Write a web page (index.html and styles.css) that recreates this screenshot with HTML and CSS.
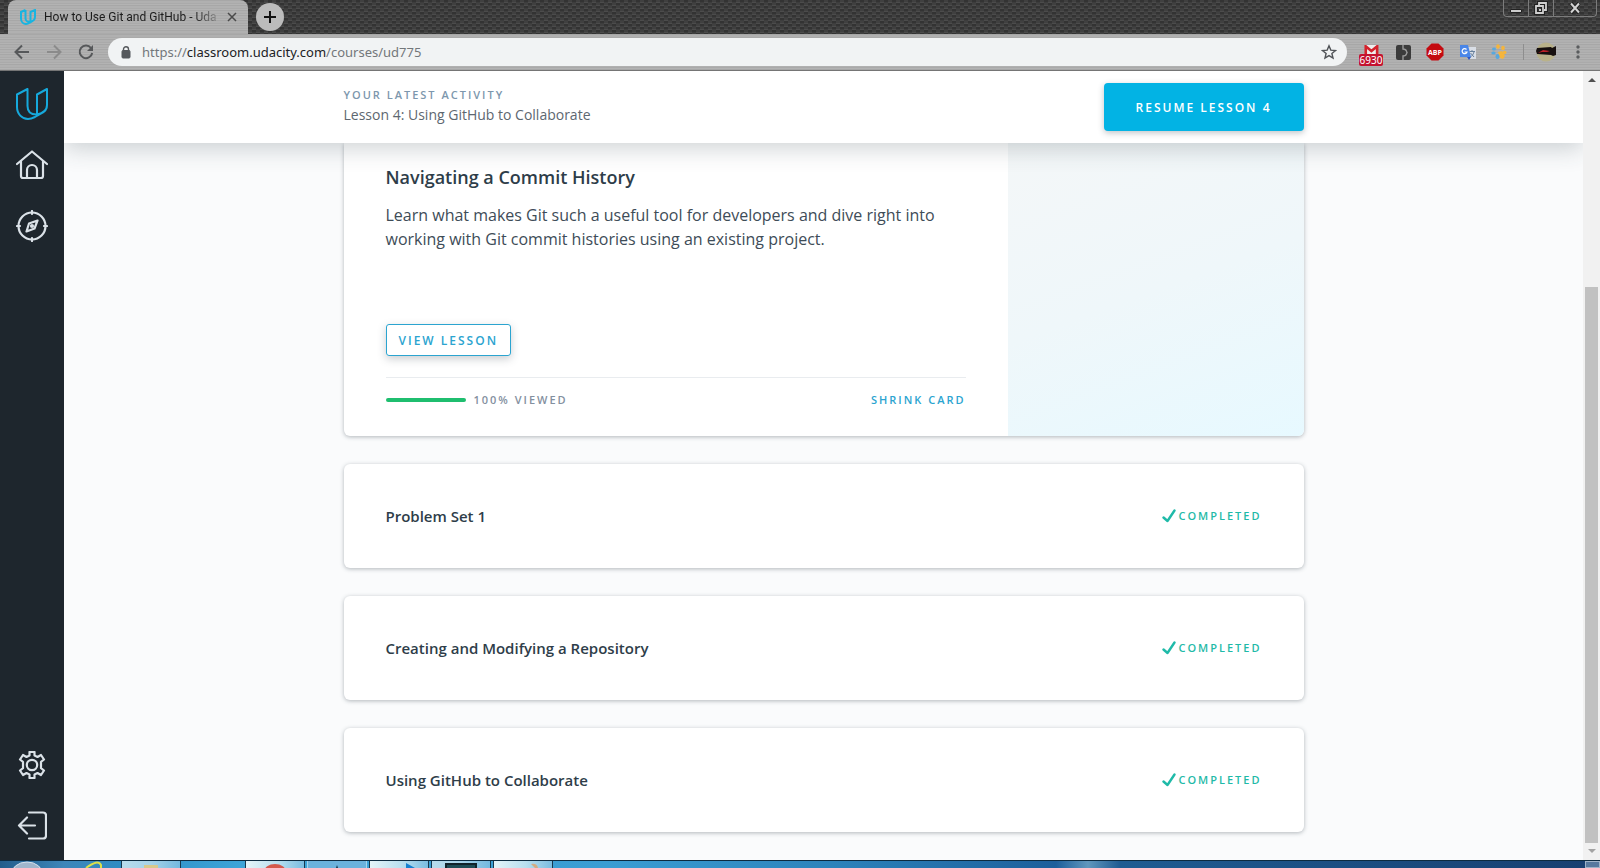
FILE: index.html
```html
<!DOCTYPE html>
<html lang="en">
<head>
<meta charset="utf-8">
<title>How to Use Git and GitHub - Udacity</title>
<link rel="stylesheet" href="styles.css">
</head>
<body>
<svg class="defs" aria-hidden="true">
  <symbol id="u-logo" viewBox="0 0 32 32"><path d="M11.500 1L1 6.500V19c0 7 5 12 11 12 3 0 5-1 7-2l8-4.500c3-2 4-4 4-7.500V1L21 6.500V27M11.500 1v17c0 5 3 8.500 9 8.500M21 26.500c5-1 10-4 10-9.500" fill="none" stroke="#16a9dc" stroke-width="2" stroke-linejoin="round"/></symbol>
  <symbol id="check" viewBox="0 0 14 14"><path d="M1.500 8.500l4 3.500L12.500 1.500" fill="none" stroke="#1fbaa8" stroke-width="2.400" stroke-linecap="round" stroke-linejoin="round"/></symbol>
</svg>

<header class="titlebar">
  <div class="tab">
    <svg class="favicon" viewBox="0 0 32 32" aria-hidden="true"><path d="M11 2L2 6v13c0 7 5 11 10 11 3 0 5-1 8-3 8-4 10-6 10-12V2l-9 4v20M11 2v17c0 4 4 7 9 7" fill="none" stroke="#18b4e0" stroke-width="4"/></svg>
    <span class="tab-title">How to Use Git and GitHub - Uda</span>
    <button class="icon-btn tab-close" aria-label="Close tab"><svg width="10" height="10" viewBox="0 0 10 10"><path d="M1 1l8 8M9 1L1 9" stroke="#4a4a4a" stroke-width="1.500"/></svg></button>
  </div>
  <button class="new-tab" aria-label="New tab"><svg width="12" height="12" viewBox="0 0 12 12"><path d="M6 0v12M0 6h12" stroke="#111" stroke-width="2"/></svg></button>
  <div class="window-buttons">
    <button class="win" aria-label="Minimize"><svg width="12" height="14" viewBox="0 0 12 14"><path d="M.5 8.500h11v3H.5z" fill="#ccc" stroke="#222"/></svg></button>
    <button class="win" aria-label="Restore"><svg width="14" height="14" viewBox="0 0 14 14" fill="none"><path d="M5 4V2h7v7h-2" stroke="#222" stroke-width="4"/><path d="M2 5h7v7H2z" stroke="#222" stroke-width="4"/><path d="M5 4V2h7v7h-2M2 5h7v7H2z" stroke="#d0d0d0" stroke-width="1.800"/><path d="M5 8h2v2H5z" fill="#ccc"/></svg></button>
    <button class="win win-close" aria-label="Close"><svg width="12" height="12" viewBox="0 0 12 12"><path d="M2 1l8 10M10 1L2 11" stroke="#222" stroke-width="4"/><path d="M2 1.500l8 9M10 1.500l-8 9" stroke="#d4d4d4" stroke-width="2"/></svg></button>
  </div>
</header>

<div class="toolbar">
  <button class="icon-btn" aria-label="Back"><svg width="16" height="16" viewBox="0 0 16 16"><path d="M15 8H2M8 1.500L1.500 8 8 14.500" fill="none" stroke="#56585a" stroke-width="2"/></svg></button>
  <button class="icon-btn" aria-label="Forward"><svg width="16" height="16" viewBox="0 0 16 16"><path d="M1 8h13M8 1.500L14.500 8 8 14.500" fill="none" stroke="#8b8b8b" stroke-width="2"/></svg></button>
  <button class="icon-btn" aria-label="Reload"><svg width="16" height="16" viewBox="0 0 16 16"><path d="M13 4A6.300 6.300 0 1 0 14.200 9" fill="none" stroke="#56585a" stroke-width="2"/><path d="M15 1v6H9z" fill="#56585a"/></svg></button>
  <div class="address">
    <svg width="10" height="13" viewBox="0 0 10 13" aria-hidden="true"><rect x="1" y="4.500" width="8" height="7.500" rx="1" fill="#55585c" stroke="#55585c"/><path d="M2.500 5V3.300a2.500 2.500 0 0 1 5 0V5" fill="none" stroke="#55585c" stroke-width="1.400"/></svg>
    <div class="url">https://<span class="host">classroom.udacity.com</span>/courses/ud775</div>
    <button class="icon-btn" aria-label="Bookmark"><svg width="16" height="16" viewBox="0 0 16 16"><path d="M8 1.800l1.800 4.300 4.700.4-3.600 3 1.100 4.600L8 11.600l-4 2.500 1.100-4.600-3.600-3 4.700-.4z" fill="none" stroke="#505357" stroke-width="1.400"/></svg></button>
  </div>
  <div class="extensions">
    <button class="icon-btn ext" aria-label="Gmail, 6930 unread"><svg width="16" height="14" viewBox="0 0 18 16"><rect x="2" width="15" height="12" fill="#eee"/><path d="M3 13V1.500L9.500 7 16 1.500V13" fill="none" stroke="#d3222c" stroke-width="3"/></svg><span class="badge">6930</span></button>
    <button class="icon-btn ext" aria-label="Code extension"><svg width="15" height="15" viewBox="0 0 15 15"><rect width="15" height="15" rx="2" fill="#3b3b3b"/><path d="M7 0v4c4 0 3 2 4 3.500C10 9 11 11 7 11v4" fill="none" stroke="#999" stroke-width="1.400"/></svg></button>
    <button class="icon-btn ext" aria-label="AdBlock Plus"><svg width="18" height="18" viewBox="0 0 18 18"><path d="M5.500.5h7l5 5v7l-5 5h-7l-5-5v-7z" fill="#c40a10"/><text x="9" y="12" text-anchor="middle" class="abp">ABP</text></svg></button>
    <button class="icon-btn ext" aria-label="Translate"><svg width="17" height="17" viewBox="0 0 17 17"><path d="M7 3h10v12H9z" fill="#d9dee6"/><path d="M1 1h8l3 12H1z" fill="#4a86e8"/><path d="M8 13h4l-2 3z" fill="#2a56c6"/><path d="M7.500 5.500A2.500 2.500 0 1 0 8 8H5.500" fill="none" stroke="#fff" stroke-width="1.200"/><path d="M10.500 7.500H16M13 6v1.500M15 8c-1 3-2 4-3.500 5M11.500 9l3.500 4" stroke="#67809c" fill="none"/></svg></button>
    <button class="icon-btn ext" aria-label="Paw extension"><svg width="16" height="16" viewBox="0 0 16 16"><g fill="#f5b53c"><ellipse cx="7" cy="2.500" rx="1.800" ry="2.300"/><ellipse cx="12" cy="4" rx="1.800" ry="2.200"/><ellipse cx="13.500" cy="8.500" rx="2" ry="1.700"/><path d="M7 8l4-1 3 5-2 3-3-1z"/></g><g fill="#57a8df"><ellipse cx="3" cy="5" rx="2" ry="1.600"/><ellipse cx="2.500" cy="9" rx="2.200" ry="1.600"/><ellipse cx="6.500" cy="12.500" rx="2" ry="2.500"/></g></svg></button>
    <span class="divider"></span>
    <button class="icon-btn ext profile" aria-label="Profile"><svg width="20" height="20" viewBox="0 0 20 20"><circle cx="10" cy="10" r="9.500" fill="#b9b28a"/><path d="M1 6l14-1 1 1 4-2v9l-3 1-2-1-14-1-1-3z" fill="#17100f"/><path d="M2 11l5-3 7 1-3 1-5 0z" fill="#bd2227"/></svg></button>
    <button class="icon-btn ext menu" aria-label="Menu"><svg width="4" height="14" viewBox="0 0 4 14" fill="#5a5c5e"><circle cx="2" cy="2" r="1.700"/><circle cx="2" cy="7" r="1.700"/><circle cx="2" cy="12" r="1.700"/></svg></button>
  </div>
</div>

<div class="page">
  <nav class="sidebar" aria-label="Main">
    <a href="#" aria-label="Udacity"><svg width="32" height="32"><use href="#u-logo"/></svg></a>
    <a href="#" aria-label="Home"><svg width="32" height="30" viewBox="0 0 32 30"><path d="M1 14L16 1.500 31 14M5 11v15q0 2 2 2h18q2 0 2-2V11M11 28V20a5 5 0 0 1 10 0v8" /></svg></a>
    <a href="#" aria-label="Explore"><svg width="32" height="32" viewBox="0 0 32 32"><circle cx="16" cy="16" r="13.500"/><path d="M16 1v3M16 28v3M1 16h3M28 16h3M21.500 10.500l-8.500 3-2.500 8 8-3z"/><circle cx="16" cy="16" r="1"/></svg></a>
    <a class="bottom" href="#" aria-label="Settings"><svg width="28" height="28" viewBox="0 0 28 28"><circle cx="14" cy="14" r="5.200"/><path d="M11.500 1h5v3.500l3 1.500 3.500-2 3 4.500-3 2.300v6.400l3 2.300-3 4.500-3.500-2-3 1.500V27h-5v-3.500l-3-1.500L5 24l-3-4.500 3-2.300v-6.400L2 8.500 5 4l3.500 2 3-1.500z"/></svg></a>
    <a href="#" aria-label="Sign out"><svg width="30" height="30" viewBox="0 0 30 30"><path d="M12 1.500h14q3 0 3 3v20q0 3-3 3H12M18 14.500H2M10 6.500l-8 8 8 8"/></svg></a>
  </nav>

  <main class="content">
    <section class="activity">
      <div class="wrap activity-row">
        <div class="activity-text">
          <h2 class="eyebrow">Your latest activity</h2>
          <p class="latest">Lesson 4: Using GitHub to Collaborate</p>
        </div>
        <button class="resume">Resume Lesson 4</button>
      </div>
    </section>

    <div class="wrap cards">
      <article class="card lesson">
        <div class="lesson-body">
          <h3 class="lesson-title">Navigating a Commit History</h3>
          <p class="lesson-text">Learn what makes Git such a useful tool for developers and dive right into working with Git commit histories using an existing project.</p>
          <button class="view">View Lesson</button>
          <div class="lesson-foot">
            <span class="bar"></span>
            <span class="viewed">100% Viewed</span>
            <button class="shrink">Shrink Card</button>
          </div>
        </div>
        <div class="lesson-art"></div>
      </article>
      <article class="card row">
        <h3 class="row-title">Problem Set 1</h3>
        <span class="done"><svg width="14" height="14" aria-hidden="true"><use href="#check"/></svg>Completed</span>
      </article>
      <article class="card row">
        <h3 class="row-title">Creating and Modifying a Repository</h3>
        <span class="done"><svg width="14" height="14" aria-hidden="true"><use href="#check"/></svg>Completed</span>
      </article>
      <article class="card row">
        <h3 class="row-title">Using GitHub to Collaborate</h3>
        <span class="done"><svg width="14" height="14" aria-hidden="true"><use href="#check"/></svg>Completed</span>
      </article>
    </div>
  </main>

  <div class="scrollbar" aria-hidden="true">
    <svg width="8" height="4" viewBox="0 0 8 4"><path d="M0 4l4-4 4 4z" fill="#505050"/></svg>
    <div class="track"><div class="thumb"></div></div>
    <svg width="8" height="4" viewBox="0 0 8 4"><path d="M0 0l4 4 4-4z" fill="#a3a3a3"/></svg>
  </div>
</div>

<footer class="taskbar" aria-hidden="true">
  <svg class="task-start" width="121" height="7" viewBox="0 0 121 7"><ellipse cx="27" cy="14" rx="16" ry="13" fill="#9fb6cc" stroke="#d5e2ee"/><path d="M86 7q12-9 15-3v3" fill="none" stroke="#dbe04a" stroke-width="2"/></svg>
  <span class="task light"><svg width="18" height="5"><path d="M2 2h14v3H2z" fill="#d9c88b"/></svg></span>
  <span class="task-gap"></span>
  <span class="task bright"><svg width="22" height="5"><ellipse cx="11" cy="9" rx="11" ry="8" fill="#d4594c"/></svg></span>
  <span class="task plain"><svg width="8" height="5"><path d="M4 2l1 3H3z" fill="#16364c"/></svg></span>
  <span class="task bright right"><svg width="10" height="5"><path d="M0 0l9 5H0z" fill="#1480d0"/></svg></span>
  <span class="task light"><svg width="32" height="5"><path d="M1 5V1h30v4" fill="#1d4b55" stroke="#10232b" stroke-width="2"/></svg></span>
  <span class="task bright right"><svg width="10" height="5"><path d="M1 1q6-1 7 4H5z" fill="#d3ab82"/></svg></span>
  <span class="task-desktop"></span>
</footer>
</body>
</html>
```
FILE: styles.css
```css
* { box-sizing: border-box; }
body {
  margin: 0;
  height: 100vh;
  display: flex;
  flex-direction: column;
  overflow: hidden;
  font-family: "Open Sans", "Noto Sans", sans-serif;
  color: #2e3d49;
}
h2, h3, p { margin: 0; }
button { font: inherit; color: inherit; padding: 0; border: 0; background: none; }
svg { flex: none; display: block; }
.defs { position: absolute; width: 0; height: 0; }
.icon-btn { display: flex; align-items: center; justify-content: center; }

/* Browser frame */
.titlebar {
  display: flex;
  flex: none;
  height: 34px;
  padding-left: 8px;
  background:
    repeating-conic-gradient(rgba(0, 0, 0, .2) 0 25%, transparent 0 50%) 0 0 / 8px 6px,
    repeating-linear-gradient(#404040 0 2px, #4c4c4c 2px 3px);
}
.tab, .toolbar {
  background: repeating-linear-gradient(#a7a7a7 0 1px, #b0b0b0 1px 3px, #aaa 3px 4px, #b3b3b3 4px 5px);
}
.tab {
  display: flex;
  align-items: center;
  width: 240px;
  padding: 0 11px 0 12px;
  border-radius: 8px 8px 0 0;
}
.favicon { width: 16px; height: 16px; }
.tab-title {
  flex: 1;
  margin-left: 8px;
  white-space: nowrap;
  font: 12px/16px Roboto, "Noto Sans", sans-serif;
  color: #1c1c1c;
  -webkit-mask-image: linear-gradient(90deg, #000 82%, transparent 98%);
  mask-image: linear-gradient(90deg, #000 82%, transparent 98%);
}
.new-tab {
  display: flex;
  align-items: center;
  justify-content: center;
  width: 28px;
  height: 28px;
  margin: 3px 0 0 8px;
  border-radius: 50%;
  background: #bcbcbc;
}
.window-buttons {
  display: flex;
  height: 17px;
  margin: 0 3px 0 auto;
  border: 1px solid #7c7c7c;
  border-top: 0;
  border-radius: 0 0 4px 4px;
}
.win { display: flex; align-items: center; justify-content: center; width: 25px; border-right: 1px solid #7c7c7c; }
.win-close { width: 42px; border: 0; }
.toolbar {
  display: flex;
  align-items: center;
  flex: none;
  gap: 16px;
  height: 37px;
  padding: 0 16px 0 14px;
  border-bottom: 1px solid #757575;
}
.address {
  display: flex;
  align-items: center;
  flex: 1;
  height: 28px;
  margin-left: -2px;
  padding: 0 10px 0 13px;
  border-radius: 14px;
  background: #f1f3f4;
}
.url { flex: 1; margin-left: 11px; font: 13px/20px "Noto Sans", sans-serif; color: #73777b; }
.host { color: #202124; }
.extensions { display: flex; align-items: center; margin-left: -8px; }
.ext { position: relative; width: 32px; height: 28px; }
.badge {
  position: absolute;
  top: 16px;
  left: 4px;
  width: 24px;
  border-radius: 2px;
  background: #c4122f;
  color: #fff;
  font: 10px/12px "Noto Sans", sans-serif;
  text-align: center;
}
.abp { font: bold 7px "Open Sans", sans-serif; fill: #fff; }
.divider { width: 1px; height: 16px; margin: 0 6px 0 8px; background: #8e8e8e; }
.menu { width: 12px; margin-left: 10px; }

/* Classroom */
.page { display: flex; flex: 1; min-height: 0; }
.sidebar {
  display: flex;
  flex-direction: column;
  align-items: center;
  flex: none;
  gap: 28px;
  width: 64px;
  padding: 16px 0 18px;
  background: #1e262d;
}
.sidebar a { display: flex; align-items: center; justify-content: center; height: 33px; fill: none; stroke: #dbe2e8; stroke-width: 2.2; stroke-linejoin: round; stroke-linecap: round; }
.sidebar .bottom { margin-top: auto; }
.content { flex: 1; min-width: 0; overflow: hidden; background: #fafbfc; }
.wrap { max-width: 960px; margin: 0 auto; }
.activity { position: relative; background: #fff; box-shadow: 0 5px 24px rgba(46, 61, 73, .24); }
.activity-row { display: flex; align-items: center; justify-content: space-between; height: 72px; }
.activity-text { padding-bottom: 4px; }
.eyebrow { font-size: 11px; line-height: 20px; font-weight: 600; letter-spacing: 2px; text-transform: uppercase; color: #7d97ad; }
.latest { font-size: 14px; line-height: 20px; color: #5d6770; }
.resume {
  height: 48px;
  padding: 0 32px;
  border-radius: 4px;
  background: #02b3e4;
  color: #fff;
  font-size: 12px;
  font-weight: 600;
  letter-spacing: 2px;
  text-transform: uppercase;
  box-shadow: 0 2px 6px rgba(46, 61, 73, .3);
}
.cards { display: flex; flex-direction: column; gap: 28px; }
.card { background: #fff; border-radius: 6px; box-shadow: 0 1px 4px rgba(46, 61, 73, .36); }
.lesson { display: flex; border-radius: 0 0 6px 6px; overflow: hidden; }
.lesson-body { flex: 1; padding: 21px 42px 26px; }
.lesson-title { font-size: 18px; line-height: 26px; font-weight: 600; }
.lesson-text { margin-top: 13px; font-size: 16px; line-height: 24px; color: #3e4c57; }
.view {
  height: 32px;
  margin: 73px 0 21px;
  padding: 0 12px;
  border: 1px solid #2ba4d0;
  border-radius: 3px;
  color: #2ba4d0;
  font-size: 12px;
  font-weight: 600;
  letter-spacing: 2px;
  text-transform: uppercase;
  box-shadow: 0 3px 8px rgba(46, 61, 73, .25);
}
.lesson-foot { display: flex; align-items: center; padding-top: 12px; border-top: 1px solid #e9ecef; font-size: 11px; line-height: 20px; font-weight: 600; letter-spacing: 2px; }
.bar { width: 80px; height: 4px; border-radius: 2px; background: #1fbe6f; }
.viewed { margin-left: 8px; color: #8390a0; text-transform: uppercase; }
.shrink { margin-left: auto; letter-spacing: 2px; text-transform: uppercase; color: #2ba4d0; }
.lesson-art { width: 296px; background: linear-gradient(160deg, #f4f7f8, #eff7fa 50%, #e7f9ff); }
.row { display: flex; align-items: center; justify-content: space-between; height: 104px; padding: 0 42px 1px; }
.row-title { font-size: 15px; line-height: 24px; font-weight: 600; }
.done { display: flex; align-items: center; gap: 2px; font-size: 11px; line-height: 20px; font-weight: 600; letter-spacing: 2px; text-transform: uppercase; color: #1fbaa8; }

.scrollbar { display: flex; flex-direction: column; align-items: center; flex: none; width: 17px; padding: 7px 0; background: #f1f1f1; }
.track { display: flex; flex-direction: column; justify-content: flex-end; flex: 1; align-self: stretch; padding: 0 2px 6px; }
.thumb { height: 73%; background: #c1c1c1; }

/* Desktop taskbar */
.taskbar { display: flex; flex: none; height: 8px; overflow: hidden; border-top: 1px solid #0c2b40; background: linear-gradient(90deg, #215d8b, #3d86b9 4%, #2c8dc4 8%, #3da4d8 15%, #3a9dd3 38%, #2c83bb 52%, #1c5f9b 66%, #5f97bd 68%, #1e5c92 70%, #173f70); }
.task { display: flex; justify-content: center; width: 60px; padding-top: 2px; margin-right: 2px; border: 1px solid #16394f; border-width: 0 1px; }
.light { background: linear-gradient(90deg, #b8dcec, #a5d2e9 50%, #73b9df); }
.bright { background: linear-gradient(90deg, #e4f4f9, #b8dfef 55%, #7abde1); }
.plain { background: #6bb2dc; border-color: #a5d5ee; }
.right { padding-left: 24px; }
.task-gap { width: 62px; }
.task-desktop { width: 15px; margin-left: auto; border: 1px solid #9eb3c8; background: #56799e; }
```
